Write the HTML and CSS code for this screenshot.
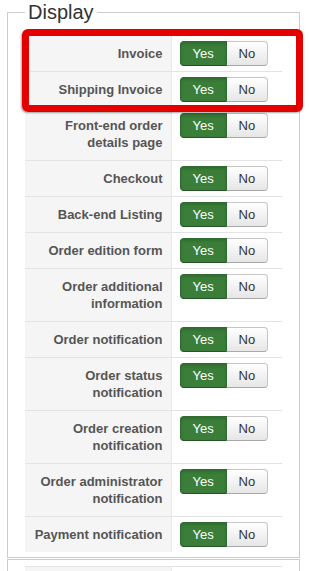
FILE: index.html
```html
<!DOCTYPE html>
<html lang="en">

<head>
    <meta charset="UTF-8">
    <meta name="viewport" content="width=device-width, initial-scale=1.0">
    <title>Display</title>
    <link rel="stylesheet" href="styles.css">
</head>

<body>

    <fieldset class="section">
        <legend>Display</legend>
        <table class="options">
            <tr>
                <td class="label">Invoice</td>
                <td class="value"><div class="yesno"><span class="yes">Yes</span><span class="no">No</span></div></td>
            </tr>
            <tr>
                <td class="label">Shipping Invoice</td>
                <td class="value"><div class="yesno"><span class="yes">Yes</span><span class="no">No</span></div></td>
            </tr>
            <tr>
                <td class="label">Front-end order details page</td>
                <td class="value"><div class="yesno"><span class="yes">Yes</span><span class="no">No</span></div></td>
            </tr>
            <tr>
                <td class="label">Checkout</td>
                <td class="value"><div class="yesno"><span class="yes">Yes</span><span class="no">No</span></div></td>
            </tr>
            <tr>
                <td class="label">Back-end Listing</td>
                <td class="value"><div class="yesno"><span class="yes">Yes</span><span class="no">No</span></div></td>
            </tr>
            <tr>
                <td class="label">Order edition form</td>
                <td class="value"><div class="yesno"><span class="yes">Yes</span><span class="no">No</span></div></td>
            </tr>
            <tr>
                <td class="label">Order additional information</td>
                <td class="value"><div class="yesno"><span class="yes">Yes</span><span class="no">No</span></div></td>
            </tr>
            <tr>
                <td class="label">Order notification</td>
                <td class="value"><div class="yesno"><span class="yes">Yes</span><span class="no">No</span></div></td>
            </tr>
            <tr>
                <td class="label">Order status notification</td>
                <td class="value"><div class="yesno"><span class="yes">Yes</span><span class="no">No</span></div></td>
            </tr>
            <tr>
                <td class="label">Order creation notification</td>
                <td class="value"><div class="yesno"><span class="yes">Yes</span><span class="no">No</span></div></td>
            </tr>
            <tr>
                <td class="label">Order administrator notification</td>
                <td class="value"><div class="yesno"><span class="yes">Yes</span><span class="no">No</span></div></td>
            </tr>
            <tr>
                <td class="label">Payment notification</td>
                <td class="value"><div class="yesno"><span class="yes">Yes</span><span class="no">No</span></div></td>
            </tr>
        </table>
    </fieldset>

    <fieldset class="section next">
        <table class="options">
            <tr>
                <td class="label">&nbsp;</td>
                <td class="value"></td>
            </tr>
        </table>
    </fieldset>

    <div class="highlight"></div>

</body>

</html>
```

FILE: styles.css
```css
body {
    margin: 0;
    width: 309px;
    font-family: "Liberation Sans", Arial, sans-serif;
    font-size: 13px;
    line-height: 17px;
    color: #333;
    background-color: #fff;
    overflow: hidden;
}

.section {
    margin: 0 9px 0 7px;
    padding: 11px 17px 5px 17px;
    border: 1px solid #ccc;
    min-width: 0;
}

.section legend {
    padding: 0 3px;
    font-size: 20px;
    line-height: 24px;
    color: #333;
}

.section.next {
    margin-top: 1px;
    padding-top: 6px;
    height: 40px;
}

.options {
    width: 257px;
    border-collapse: collapse;
    table-layout: fixed;
}

.options tr {
    border-top: 1px solid #e3e3e3;
}

.options td {
    padding: 0;
    vertical-align: top;
}

.options .label {
    width: 146px;
    box-sizing: border-box;
    padding: 9px 8px 9px 5px;
    text-align: right;
    font-weight: bold;
    color: #555;
    background-color: #f5f5f5;
    border-right: 1px solid #e8e8e8;
}

.options .value {
    padding: 5px 0 5px 8px;
    background-color: #fff;
}

.yesno {
    display: flex;
    height: 25px;
}

.yesno span {
    display: block;
    box-sizing: border-box;
    height: 25px;
    padding: 0 12px;
    line-height: 23px;
    font-size: 13px;
    border: 1px solid #bbb;
}

.yesno .yes {
    width: 47px;
    background-color: #3a7e3a;
    border-color: #2f6a2f #2f6a2f #255525 #2f6a2f;
    color: #fff;
    border-radius: 4px 0 0 4px;
    box-shadow: inset 0 2px 3px rgba(0, 0, 0, 0.15);
}

.yesno .no {
    width: 41px;
    border-left: none;
    background: linear-gradient(#ffffff, #e6e6e6);
    border-color: #c5c5c5 #c5c5c5 #a8a8a8;
    color: #333;
    border-radius: 0 4px 4px 0;
}

.highlight {
    position: absolute;
    left: 22px;
    top: 29px;
    width: 281px;
    height: 83px;
    box-sizing: border-box;
    border: 7px solid #e50000;
    border-radius: 6px;
    box-shadow: -1px 1px 2px rgba(0, 0, 0, 0.35);
}
```
